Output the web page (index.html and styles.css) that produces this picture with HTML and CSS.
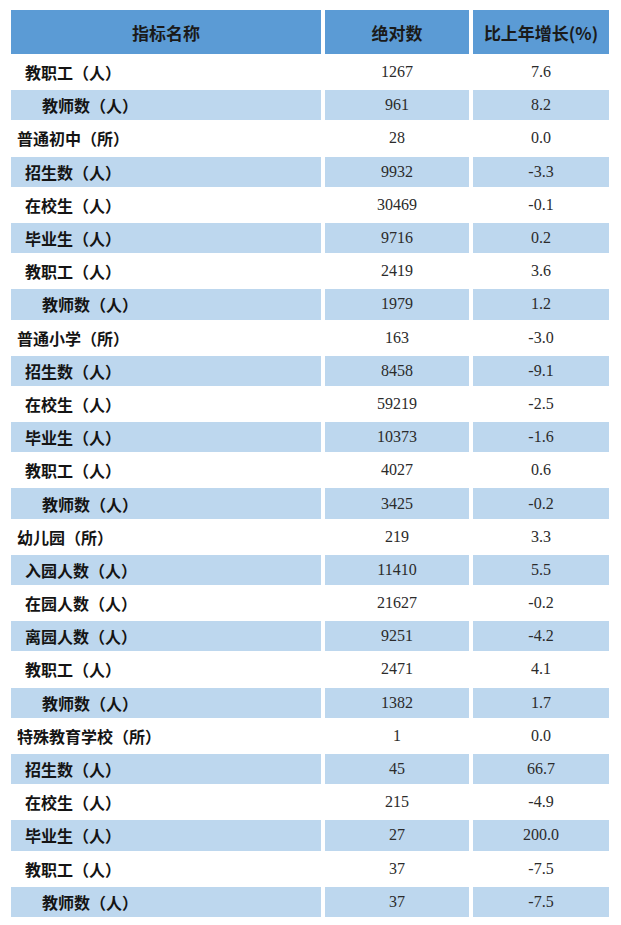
FILE: index.html
```html
<!DOCTYPE html>
<html lang="zh-CN">
<head>
<meta charset="utf-8">
<title>教育统计</title>
<link rel="stylesheet" href="styles.css">
</head>
<body>
<div class="wrap">
<table class="stats">
<colgroup><col class="c-name"><col class="c-abs"><col class="c-pct"></colgroup>
<thead>
<tr><th>指标名称</th><th>绝对数</th><th>比上年增长(%)</th></tr>
</thead>
<tbody>
<tr><td class="name l1">教职工（人）</td><td class="num">1267</td><td class="num">7.6</td></tr>
<tr><td class="name l2">教师数（人）</td><td class="num">961</td><td class="num">8.2</td></tr>
<tr><td class="name l0">普通初中（所）</td><td class="num">28</td><td class="num">0.0</td></tr>
<tr><td class="name l1">招生数（人）</td><td class="num">9932</td><td class="num">-3.3</td></tr>
<tr><td class="name l1">在校生（人）</td><td class="num">30469</td><td class="num">-0.1</td></tr>
<tr><td class="name l1">毕业生（人）</td><td class="num">9716</td><td class="num">0.2</td></tr>
<tr><td class="name l1">教职工（人）</td><td class="num">2419</td><td class="num">3.6</td></tr>
<tr><td class="name l2">教师数（人）</td><td class="num">1979</td><td class="num">1.2</td></tr>
<tr><td class="name l0">普通小学（所）</td><td class="num">163</td><td class="num">-3.0</td></tr>
<tr><td class="name l1">招生数（人）</td><td class="num">8458</td><td class="num">-9.1</td></tr>
<tr><td class="name l1">在校生（人）</td><td class="num">59219</td><td class="num">-2.5</td></tr>
<tr><td class="name l1">毕业生（人）</td><td class="num">10373</td><td class="num">-1.6</td></tr>
<tr><td class="name l1">教职工（人）</td><td class="num">4027</td><td class="num">0.6</td></tr>
<tr><td class="name l2">教师数（人）</td><td class="num">3425</td><td class="num">-0.2</td></tr>
<tr><td class="name l0">幼儿园（所）</td><td class="num">219</td><td class="num">3.3</td></tr>
<tr><td class="name l1">入园人数（人）</td><td class="num">11410</td><td class="num">5.5</td></tr>
<tr><td class="name l1">在园人数（人）</td><td class="num">21627</td><td class="num">-0.2</td></tr>
<tr><td class="name l1">离园人数（人）</td><td class="num">9251</td><td class="num">-4.2</td></tr>
<tr><td class="name l1">教职工（人）</td><td class="num">2471</td><td class="num">4.1</td></tr>
<tr><td class="name l2">教师数（人）</td><td class="num">1382</td><td class="num">1.7</td></tr>
<tr><td class="name l0">特殊教育学校（所）</td><td class="num">1</td><td class="num">0.0</td></tr>
<tr><td class="name l1">招生数（人）</td><td class="num">45</td><td class="num">66.7</td></tr>
<tr><td class="name l1">在校生（人）</td><td class="num">215</td><td class="num">-4.9</td></tr>
<tr><td class="name l1">毕业生（人）</td><td class="num">27</td><td class="num">200.0</td></tr>
<tr><td class="name l1">教职工（人）</td><td class="num">37</td><td class="num">-7.5</td></tr>
<tr><td class="name l2">教师数（人）</td><td class="num">37</td><td class="num">-7.5</td></tr>
</tbody>
</table>
</div>
</body>
</html>
```

FILE: styles.css
```css
html, body {
  margin: 0;
  padding: 0;
  background: #ffffff;
}

.wrap {
  padding: 7px 0 0 7px;
}

.stats {
  border-collapse: separate;
  border-spacing: 4px 3px;
  table-layout: fixed;
  width: 606px;
}

.c-name { width: 310px; }
.c-abs { width: 144px; }
.c-pct { width: 136px; }

.stats th {
  height: 44px;
  padding: 0;
  background: #5b9bd5;
  color: #1a1a1a;
  font-family: "Noto Sans CJK SC", "Noto Sans", sans-serif;
  font-weight: 700;
  font-size: 17px;
  text-align: center;
  vertical-align: middle;
  white-space: nowrap;
}

.stats td {
  height: 30.2px;
  padding: 0;
  vertical-align: middle;
  white-space: nowrap;
}

.stats tbody tr:nth-child(even) td {
  background: #bdd7ee;
}

.name {
  font-family: "Noto Sans CJK SC", "Noto Sans", sans-serif;
  font-weight: 700;
  font-size: 16px;
  color: #141414;
  text-align: left;
}

.l0 { padding-left: 6px !important; }
.l1 { padding-left: 14px !important; }
.l2 { padding-left: 31px !important; }

.num {
  font-family: "Liberation Serif", "Times New Roman", serif;
  font-size: 16px;
  color: #2b2b2b;
  text-align: center;
}
```
